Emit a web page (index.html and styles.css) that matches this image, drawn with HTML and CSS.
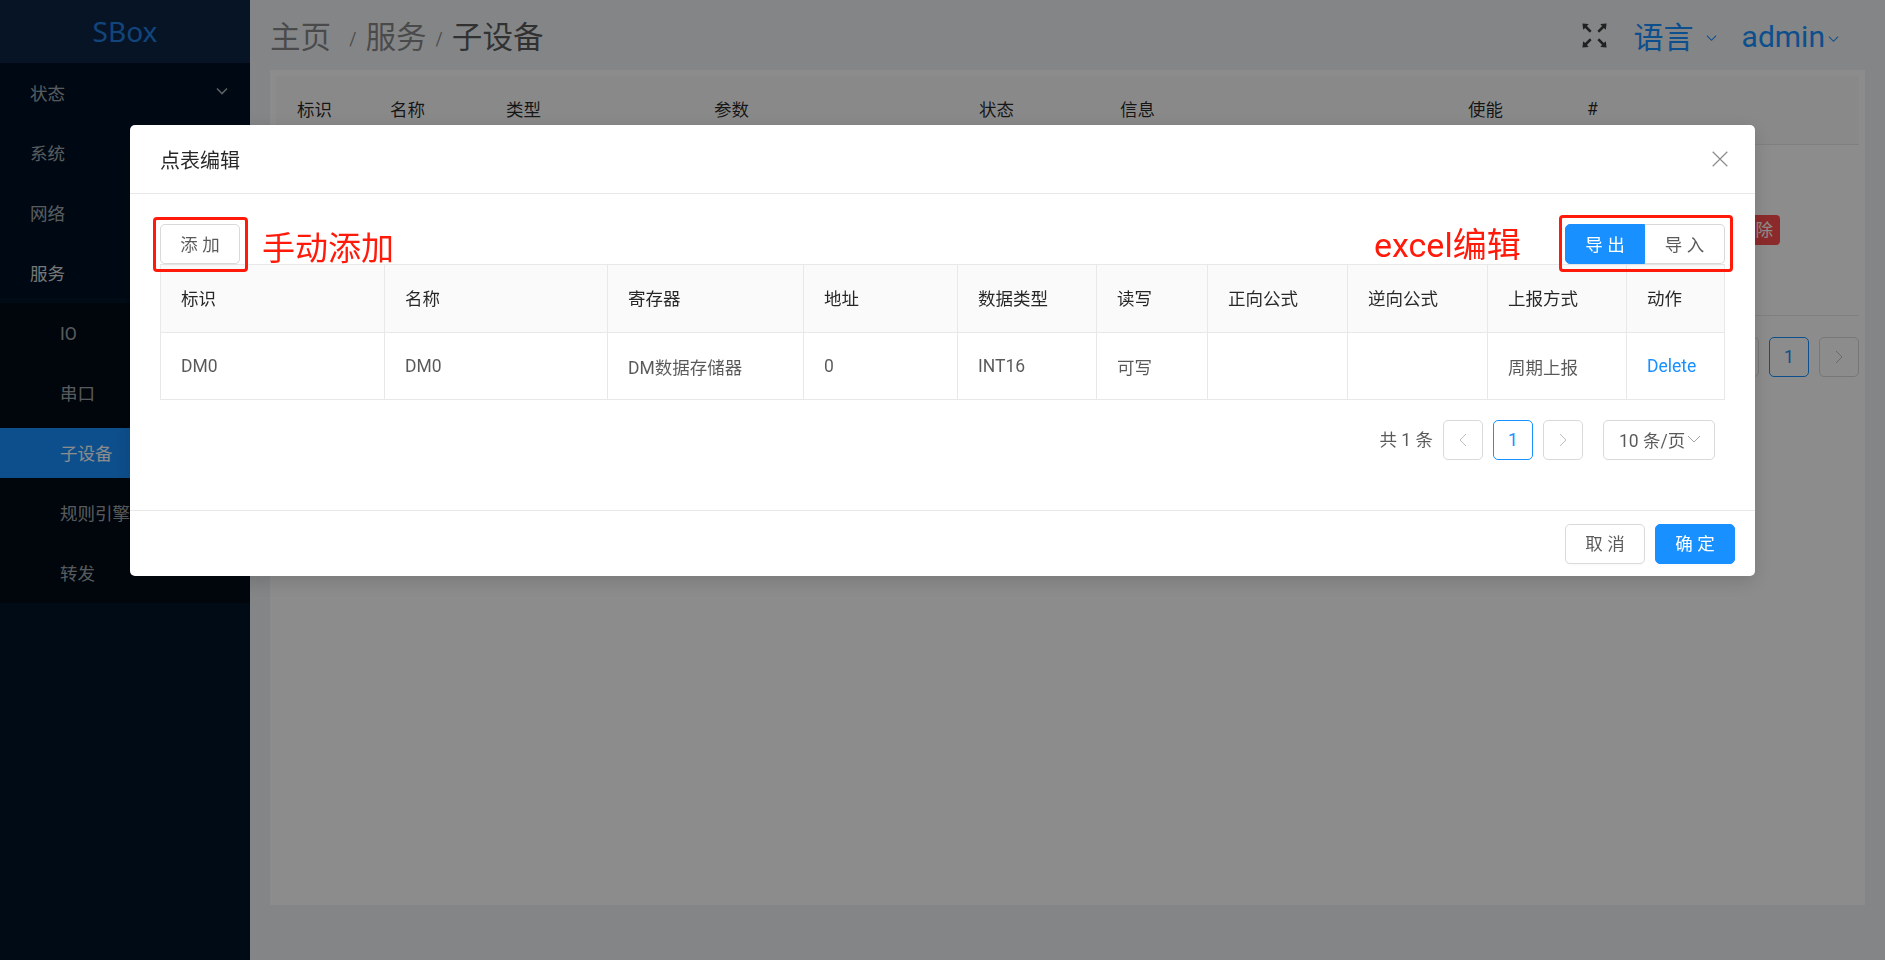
FILE: index.html
```html
<!DOCTYPE html>
<html lang="en">
<head>
  <meta charset="UTF-8">
  <title>SBox</title>
  <link rel="stylesheet" href="styles.css">
</head>
<body>
  <div class="app">
    <!-- Sidebar -->
    <aside class="sidebar">
      <div class="logo">SBox</div>
      <ul class="menu">
        <li class="menu-item">状态
          <svg class="menu-arrow" viewBox="0 0 12 8"><path d="M1 1.5l5 5 5-5" fill="none" stroke="currentColor" stroke-width="1.6"/></svg>
        </li>
        <li class="menu-item">系统</li>
        <li class="menu-item">网络</li>
        <li class="menu-item menu-open">服务</li>
      </ul>
      <ul class="submenu">
        <li class="sub-item">IO</li>
        <li class="sub-item">串口</li>
        <li class="sub-item sub-active">子设备</li>
        <li class="sub-item">规则引擎</li>
        <li class="sub-item">转发</li>
      </ul>
    </aside>

    <div class="main">
      <!-- Top Bar -->
      <header class="top-bar">
        <nav class="crumbs">
          <span class="crumb">主页</span><span class="sep first">/</span>
          <span class="crumb">服务</span><span class="sep">/</span>
          <span class="crumb crumb-last">子设备</span>
        </nav>
        <div class="top-right">
          <svg class="full-icon" viewBox="0 0 1024 1024"><path fill="currentColor" d="M290 236.4l43.9-43.9a8.01 8.01 0 0 0-4.7-13.6L169 160c-5.1-.6-9.5 3.7-8.9 8.9L179 329.1c.8 6.6 8.9 9.4 13.6 4.7l43.7-43.7L370 423.7c3.1 3.1 8.2 3.1 11.3 0l42.4-42.3c3.1-3.1 3.1-8.2 0-11.3L290 236.4zm352.7 187.3c3.1 3.1 8.2 3.1 11.3 0l133.7-133.6 43.7 43.7a8.01 8.01 0 0 0 13.6-4.7L863.9 169c.6-5.1-3.7-9.5-8.9-8.9L694.8 179c-6.6.8-9.4 8.9-4.7 13.6l43.9 43.9L600.3 370a8.03 8.03 0 0 0 0 11.3l42.4 42.4zM845 694.9c-.8-6.6-8.9-9.4-13.6-4.7l-43.7 43.7L654 600.3a8.03 8.03 0 0 0-11.3 0l-42.4 42.3a8.03 8.03 0 0 0 0 11.3L734 787.6l-43.9 43.9a8.01 8.01 0 0 0 4.7 13.6L855 864c5.1.6 9.5-3.7 8.9-8.9L845 694.9zm-463.7-94.6a8.03 8.03 0 0 0-11.3 0L236.3 733.9l-43.7-43.7a8.01 8.01 0 0 0-13.6 4.7L160.1 855c-.6 5.1 3.7 9.5 8.9 8.9L329.2 845c6.6-.8 9.4-8.9 4.7-13.6L290 787.6 423.7 654c3.1-3.1 3.1-8.2 0-11.3l-42.4-42.4z"/></svg>
          <span class="top-link lang">语言
            <svg class="chev" viewBox="0 0 12 8"><path d="M1 1.5l5 5 5-5" fill="none" stroke="currentColor" stroke-width="1.2"/></svg>
          </span>
          <span class="top-link user">admin<svg class="chev" viewBox="0 0 12 8"><path d="M1 1.5l5 5 5-5" fill="none" stroke="currentColor" stroke-width="1.2"/></svg></span>
        </div>
      </header>

      <!-- Device list behind the dialog -->
      <section class="card">
        <table class="dev-table">
          <colgroup>
            <col style="width:93px"><col style="width:116px"><col style="width:208px"><col style="width:265px"><col style="width:141px"><col style="width:348px"><col style="width:119px"><col>
          </colgroup>
          <thead>
            <tr><th>标识</th><th>名称</th><th>类型</th><th>参数</th><th>状态</th><th>信息</th><th>使能</th><th>#</th></tr>
          </thead>
          <tbody>
            <tr><td colspan="7"></td><td class="del-cell"><span class="del-tag">删除</span></td></tr>
          </tbody>
        </table>
        <div class="dev-pager">
          <span class="page-btn dim"></span>
          <span class="page-btn active-page">1</span>
          <span class="page-btn dim">
            <svg class="page-arrow" viewBox="0 0 8 14"><path d="M1 1l6 6-6 6" fill="none" stroke="currentColor"/></svg>
          </span>
        </div>
      </section>
    </div>
  </div>

  <!-- Dialog -->
  <div class="mask"></div>
  <div class="modal">
    <div class="modal-head">
      <span class="modal-title">点表编辑</span>
      <svg class="modal-close" viewBox="0 0 16 16"><path d="M1.5 1.5l13 13M14.5 1.5l-13 13" fill="none" stroke="currentColor" stroke-width="1.1"/></svg>
    </div>
    <div class="modal-body">
      <div class="toolbar">
        <button class="btn">添 加</button>
        <div class="btn-group">
          <button class="btn btn-primary">导 出</button>
          <button class="btn">导 入</button>
        </div>
      </div>
      <table class="point-table">
        <colgroup>
          <col style="width:224px"><col style="width:223px"><col style="width:196px"><col style="width:154px"><col style="width:139px"><col style="width:111px"><col style="width:140px"><col style="width:140px"><col style="width:139px"><col>
        </colgroup>
        <thead>
          <tr><th>标识</th><th>名称</th><th>寄存器</th><th>地址</th><th>数据类型</th><th>读写</th><th>正向公式</th><th>逆向公式</th><th>上报方式</th><th>动作</th></tr>
        </thead>
        <tbody>
          <tr><td>DM0</td><td>DM0</td><td>DM数据存储器</td><td>0</td><td>INT16</td><td>可写</td><td></td><td></td><td>周期上报</td><td><a class="del-link">Delete</a></td></tr>
        </tbody>
      </table>
      <div class="pager">
        <span class="pager-total">共 1 条</span>
        <span class="page-btn">
          <svg class="page-arrow" viewBox="0 0 8 14"><path d="M7 1L1 7l6 6" fill="none" stroke="currentColor"/></svg>
        </span>
        <span class="page-btn current">1</span>
        <span class="page-btn">
          <svg class="page-arrow" viewBox="0 0 8 14"><path d="M1 1l6 6-6 6" fill="none" stroke="currentColor"/></svg>
        </span>
        <span class="page-size">10 条/页
          <svg class="size-chev" viewBox="0 0 14 8"><path d="M1 1l6 6 6-6" fill="none" stroke="currentColor"/></svg>
        </span>
      </div>
    </div>
    <div class="modal-foot">
      <button class="btn">取 消</button>
      <button class="btn btn-primary">确 定</button>
    </div>

    <!-- Red notes drawn on top of the dialog -->
    <div class="note-box note-box-add"></div>
    <div class="note-box note-box-excel"></div>
    <span class="note note-add">手动添加</span>
    <span class="note note-excel">excel编辑</span>
  </div>
</body>
</html>
```

FILE: styles.css
```css
/* Basic Reset */
* {
  box-sizing: border-box;
  margin: 0;
  padding: 0;
}

body {
  font-family: Roboto, "Noto Sans CJK SC", sans-serif;
  font-size: 17.5px;
  color: rgba(0, 0, 0, 0.65);
  background: #f0f2f5;
  height: 960px;
  overflow: hidden;
}

ul {
  list-style: none;
}

.app {
  display: flex;
  height: 960px;
}

/* Sidebar */
.sidebar {
  width: 250px;
  flex-shrink: 0;
  background: #001529;
  color: rgba(255, 255, 255, 0.65);
}

.logo {
  height: 63px;
  background: #0c2545;
  color: #1f7fe0;
  font-family: "Noto Sans", sans-serif;
  font-size: 28px;
  line-height: 63px;
  text-align: center;
}

.menu {
  padding-top: 5px;
  background: #001224;
}

.menu-item {
  height: 50px;
  line-height: 52px;
  margin-bottom: 10px;
  padding-left: 30px;
  position: relative;
}

.menu-open {
  margin-bottom: 5px;
  color: rgba(255, 255, 255, 0.85);
}

.menu-arrow {
  position: absolute;
  right: 22px;
  top: 19px;
  width: 12px;
  height: 8px;
}

.submenu {
  background: #000c17;
  height: 300px;
  padding-top: 5px;
}

.sub-item {
  height: 50px;
  line-height: 52px;
  margin-bottom: 10px;
  padding-left: 60px;
}

.sub-active {
  background: #1890ff;
  color: #fff;
}

/* Main */
.main {
  flex: 1;
  padding: 0 20px;
  min-width: 0;
}

.top-bar {
  height: 70px;
  display: flex;
  align-items: center;
  justify-content: space-between;
}

.crumbs {
  font-size: 30.6px;
  color: rgba(0, 0, 0, 0.45);
  display: flex;
  align-items: center;
}

.crumb-last {
  color: rgba(0, 0, 0, 0.65);
}

.sep {
  font-size: 17.5px;
  margin: 8px 9px 0;
}

.sep.first {
  margin-left: 18px;
}

.top-right {
  display: flex;
  align-items: center;
  padding-right: 26px;
}

.full-icon {
  width: 35px;
  height: 35px;
  color: rgba(0, 0, 0, 0.75);
  margin-right: 22px;
}

.top-link {
  color: #1890ff;
  font-size: 30px;
  display: flex;
  align-items: center;
}

.lang {
  margin-right: 25px;
}

.user {
  padding-top: 2px;
}

.chev {
  width: 11px;
  height: 8px;
  margin-left: 3px;
  margin-top: 6px;
}

.lang .chev {
  margin-left: 12px;
}

/* Device list behind the dialog */
.card {
  height: 835px;
  background: #fff;
  padding: 6px;
}

.dev-table {
  width: 100%;
  border-collapse: collapse;
  table-layout: fixed;
}

.dev-table th {
  height: 68px;
  background: #fafafa;
  font-weight: 400;
  text-align: left;
  padding: 0 0 2px 21px;
  color: rgba(0, 0, 0, 0.85);
  border-bottom: 1px solid #e8e8e8;
}

.dev-table td {
  height: 171px;
  border-bottom: 1px solid #e8e8e8;
}

.del-tag {
  display: block;
  width: 49px;
  height: 30px;
  line-height: 30px;
  margin-left: auto;
  margin-right: 79px;
  background: #ff4d4f;
  color: #fff;
  border-radius: 4px;
  text-align: center;
}

.dev-pager {
  display: flex;
  justify-content: flex-end;
  gap: 10px;
  margin-top: 21px;
}

/* Pager buttons */
.page-btn {
  width: 40px;
  height: 40px;
  border: 1px solid #d9d9d9;
  border-radius: 5px;
  display: flex;
  align-items: center;
  justify-content: center;
  color: rgba(0, 0, 0, 0.25);
  background: #fff;
}

.active-page,
.current {
  border-color: #1890ff;
  color: #1890ff;
}

.page-arrow {
  width: 8px;
  height: 14px;
}

/* Dialog */
.mask {
  position: fixed;
  inset: 0;
  background: rgba(0, 0, 0, 0.45);
}

.modal {
  position: fixed;
  left: 130px;
  top: 125px;
  width: 1625px;
  height: 451px;
  background: #fff;
  border-radius: 5px;
  box-shadow: 0 5px 20px rgba(0, 0, 0, 0.15);
  display: flex;
  flex-direction: column;
}

.modal-head {
  height: 69px;
  flex-shrink: 0;
  border-bottom: 1px solid #e8e8e8;
  display: flex;
  align-items: center;
  justify-content: space-between;
  padding: 0 26px 0 30px;
}

.modal-title {
  font-size: 20px;
  color: rgba(0, 0, 0, 0.85);
}

.modal-close {
  width: 18px;
  height: 18px;
  color: rgba(0, 0, 0, 0.45);
}

.modal-body {
  flex: 1;
  padding: 30px 30px 0;
}

.toolbar {
  display: flex;
  justify-content: space-between;
}

.btn {
  width: 80px;
  height: 40px;
  padding-bottom: 2px;
  border: 1px solid #d9d9d9;
  border-radius: 5px;
  background: #fff;
  font-family: inherit;
  font-size: 17.5px;
  color: rgba(0, 0, 0, 0.65);
  box-shadow: 0 2px 0 rgba(0, 0, 0, 0.015);
}

.btn-primary {
  background: #1890ff;
  border-color: #1890ff;
  color: #fff;
}

.btn-group {
  display: flex;
}

.btn-group .btn:first-child {
  border-radius: 5px 0 0 5px;
}

.btn-group .btn:last-child {
  border-left: 0;
  border-radius: 0 5px 5px 0;
}

.point-table {
  width: 100%;
  border-collapse: collapse;
  table-layout: fixed;
}

.point-table th,
.point-table td {
  border: 1px solid #e8e8e8;
  padding: 0 20px;
  text-align: left;
  font-weight: 400;
}

.point-table th {
  height: 68px;
  padding-bottom: 2px;
  background: #fafafa;
  color: rgba(0, 0, 0, 0.85);
}

.point-table td {
  height: 67px;
}

.del-link {
  color: #1890ff;
}

.pager {
  display: flex;
  justify-content: flex-end;
  align-items: center;
  gap: 10px;
  margin-top: 20px;
  padding-right: 10px;
}

.pager-total {
  padding-bottom: 4px;
}

.page-size {
  width: 112px;
  height: 40px;
  margin-left: 10px;
  padding: 0 0 2px 15px;
  border: 1px solid #d9d9d9;
  border-radius: 5px;
  display: flex;
  align-items: center;
  gap: 2px;
}

.size-chev {
  width: 14px;
  height: 8px;
  color: rgba(0, 0, 0, 0.35);
}

.modal-foot {
  height: 66px;
  flex-shrink: 0;
  border-top: 1px solid #e8e8e8;
  display: flex;
  justify-content: flex-end;
  align-items: center;
  gap: 10px;
  padding-right: 20px;
}

/* Red notes */
.note-box {
  position: absolute;
  border: 3.5px solid #ff1a0a;
  border-radius: 4px;
}

.note-box-add {
  left: 23px;
  top: 92px;
  width: 95px;
  height: 55px;
}

.note-box-excel {
  left: 1429px;
  top: 90px;
  width: 174px;
  height: 57px;
}

.note {
  position: absolute;
  font-size: 33px;
  line-height: 44px;
  color: #ff1a0a;
  white-space: nowrap;
}

.note-add {
  left: 132px;
  top: 102px;
}

.note-excel {
  left: 1244px;
  top: 98px;
  font-size: 34px;
}
```
